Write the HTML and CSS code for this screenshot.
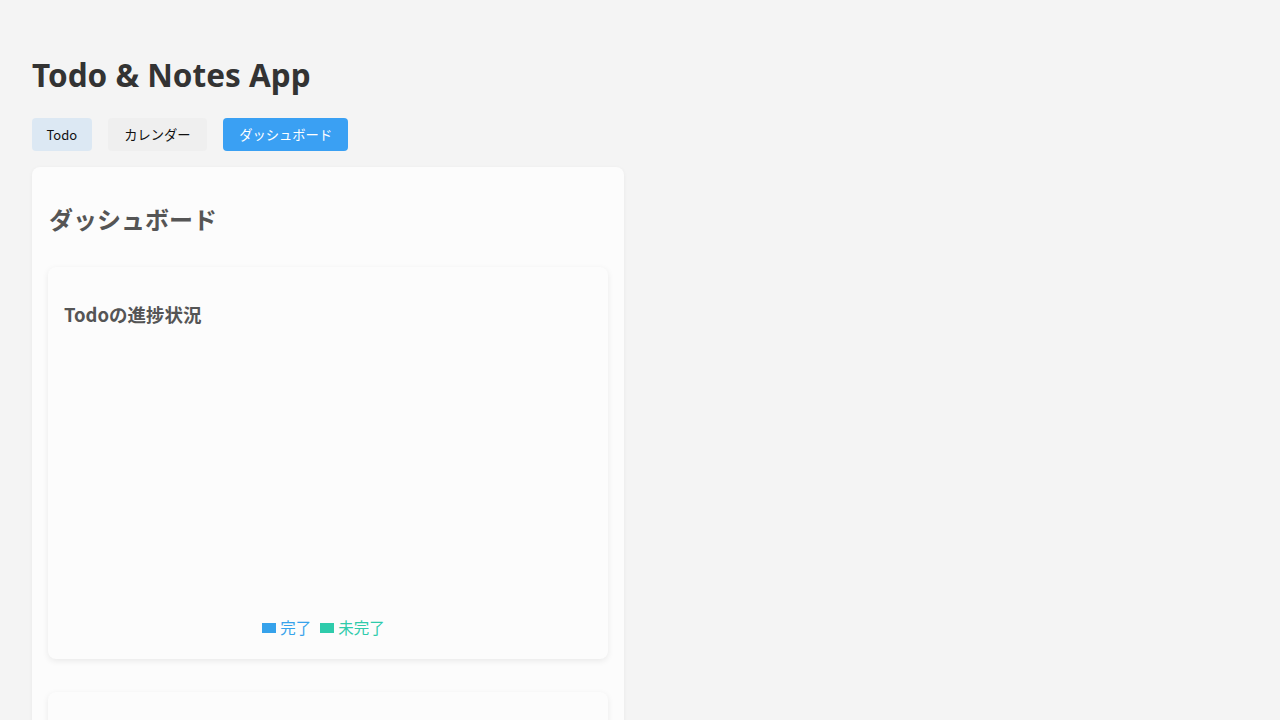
FILE: index.html
```html
<!DOCTYPE html>
<html lang="ja">
<head>
<meta charset="utf-8">
<title>Todo &amp; Notes App</title>
<link rel="stylesheet" href="styles.css">
</head>
<body>
<div class="app">
  <h1 class="app-title">Todo &amp; Notes App</h1>
  <nav class="tabs">
    <button class="tab tab-todo">Todo</button>
    <button class="tab tab-calendar">カレンダー</button>
    <button class="tab tab-active">ダッシュボード</button>
  </nav>
  <section class="panel">
    <h2 class="panel-title">ダッシュボード</h2>
    <div class="card">
      <h3 class="card-title">Todoの進捗状況</h3>
      <div class="chart">
        <div class="chart-area"></div>
        <div class="legend">
          <span class="legend-item legend-done"><span class="swatch"></span>完了</span>
          <span class="legend-item legend-open"><span class="swatch"></span>未完了</span>
        </div>
      </div>
    </div>
    <div class="card card-empty"></div>
  </section>
</div>
</body>
</html>
```
FILE: styles.css
```css
html, body {
  margin: 0;
  padding: 0;
  background: #f4f4f4;
}
body {
  font-family: "Noto Sans", "Noto Sans CJK JP", sans-serif;
  color: #333;
}
.app {
  padding: 32px;
}
.app-title {
  font-size: 31.5px;
  font-weight: 700;
  line-height: 43px;
  margin: 21px 0 22px;
  color: #333;
}
.tabs {
  display: flex;
  gap: 16px;
  margin-bottom: 16px;
}
.tab {
  font-family: "Noto Sans CJK JP", "Noto Sans", sans-serif;
  font-size: 13.3px;
  height: 33px;
  padding: 0 16px;
  border: none;
  border-radius: 4px;
  color: #111;
  cursor: pointer;
}
.tab-todo {
  background: #dce8f3;
  font-size: 13px;
  padding: 0 14.5px;
}
.tab-calendar {
  background: #efefef;
  padding: 0 16.5px;
}
.tab-active {
  background: #3aa0f3;
  color: #fff;
}
.panel {
  width: 560px;
  background: #fcfcfc;
  border-radius: 8px;
  padding: 16px;
  box-shadow: 0 1px 4px rgba(0, 0, 0, 0.05);
  min-height: 600px;
}
.panel-title {
  font-family: "Noto Sans CJK JP", sans-serif;
  font-size: 24px;
  font-weight: 700;
  color: #555;
  line-height: 34px;
  margin: 19px 0 31px 1px;
}
.card {
  background: #fcfcfc;
  border-radius: 8px;
  padding: 16px;
  box-shadow: 0 2px 6px rgba(0, 0, 0, 0.08);
  margin-bottom: 33px;
}
.card-empty {
  height: 300px;
}
.card-title {
  font-family: "Noto Sans CJK JP", sans-serif;
  font-size: 18.5px;
  font-weight: 700;
  color: #555;
  line-height: 26px;
  margin: 18px 0 0;
}
.chart {
  height: 316px;
  display: flex;
  flex-direction: column;
  justify-content: flex-end;
  align-items: center;
}
.chart-area {
  flex: 1;
}
.legend {
  display: flex;
  gap: 9px;
  font-family: "Noto Sans CJK JP", sans-serif;
  font-size: 15.5px;
  line-height: 20px;
  margin-bottom: 6px;
  margin-right: 9px;
}
.legend-item {
  display: flex;
  align-items: center;
  gap: 4px;
}
.swatch {
  display: inline-block;
  width: 14px;
  height: 10px;
  margin-top: 2px;
}
.legend-done {
  color: #36a2eb;
}
.legend-done .swatch {
  background: #36a2eb;
}
.legend-open {
  color: #2ecbab;
}
.legend-open .swatch {
  background: #2ecbab;
}
```
